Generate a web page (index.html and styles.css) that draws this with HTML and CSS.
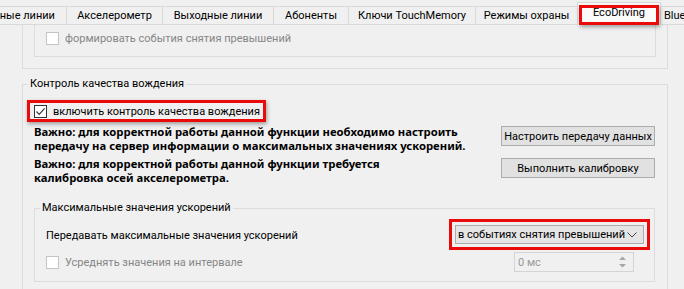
FILE: index.html
```html
<!DOCTYPE html>
<html lang="ru">
<head>
<meta charset="utf-8">
<link rel="stylesheet" href="styles.css">
</head>
<body>
<div class="tabbar">
  <div class="tab t0">Входные линии</div>
  <div class="tab t1">Акселерометр</div>
  <div class="tab t2">Выходные линии</div>
  <div class="tab t3">Абоненты</div>
  <div class="tab t4">Ключи TouchMemory</div>
  <div class="tab t5">Режимы охраны</div>
  <div class="tab active">EcoDriving</div>
  <div class="tab t7">Bluetooth</div>
</div>
<div class="page">
  <div class="g1">
    <div class="g1i">
      <label class="chk disabled"><span class="box"></span>формировать события снятия превышений</label>
    </div>
  </div>
  <fieldset class="grp g2">
    <legend>Контроль качества вождения</legend>
    <label class="chk hl"><span class="box checked"><svg width="11" height="11" viewBox="0 0 11 11"><path d="M1.5 5.5 L4.2 8.3 L9.6 2.3" fill="none" stroke="#3a3a3a" stroke-width="1.2"/></svg></span>включить контроль качества вождения</label>
    <div class="notes">
      <p class="note">Важно: для корректной работы данной функции необходимо настроить<br>передачу на сервер информации о максимальных значениях ускорений.</p>
      <button class="btn b1">Настроить передачу данных</button>
      <p class="note">Важно: для корректной работы данной функции требуется<br>калибровка осей акселерометра.</p>
      <button class="btn b2">Выполнить калибровку</button>
    </div>
    <fieldset class="grp g3">
      <legend>Максимальные значения ускорений</legend>
      <div class="row r1">
        <span class="lbl">Передавать максимальные значения ускорений</span>
        <div class="select">в событиях снятия превышений<svg class="chev" width="10" height="6" viewBox="0 0 10 6"><path d="M0.5 0.5 L5 5 L9.5 0.5" fill="none" stroke="#444" stroke-width="1"/></svg></div>
      </div>
      <div class="row r2">
        <label class="chk disabled"><span class="box"></span>Усреднять значения на интервале</label>
        <div class="spin"><span>0 мс</span><span class="arrows"><svg width="9" height="14" viewBox="0 0 9 14"><path d="M1 5 L4.5 1.5 L8 5 Z M1 9 L4.5 12.5 L8 9 Z" fill="#a6a6a6"/></svg></span></div>
      </div>
    </fieldset>
  </fieldset>
</div>
</body>
</html>
```

FILE: styles.css
```css
html, body {
  margin: 0;
  padding: 0;
}
body {
  width: 684px;
  height: 289px;
  overflow: hidden;
  background: #f0f0f0;
  font-family: Roboto, "Noto Sans", sans-serif;
  font-size: 11px;
  color: #000;
}
.tabbar {
  height: 25px;
  box-sizing: border-box;
  border-bottom: 1px solid #d9d9d9;
  display: flex;
  align-items: flex-end;
  white-space: nowrap;
}
.tab {
  box-sizing: border-box;
  border: 1px solid #d9d9d9;
  border-bottom: none;
  margin-left: -1px;
  margin-bottom: -1px;
  height: 19px;
  display: flex;
  align-items: center;
  justify-content: center;
  flex: none;
  padding-bottom: 1px;
}
.t0 { width: 104px; margin-left: -37px; }
.t1 { width: 97px; }
.t2 { width: 112px; }
.t3 { width: 76px; }
.t4 { width: 128px; }
.t5 { width: 103px; }
.tab.active {
  width: 84px;
  height: 23px;
  background: #fbfbfb;
  position: relative;
  margin-left: -1px;
  margin-right: -2px;
  z-index: 1;
  padding-bottom: 3px;
}
.tab.active::after {
  content: "";
  position: absolute;
  left: 1px;
  right: 1px;
  top: 2px;
  bottom: 0;
  border: 3px solid #ea0a0a;
  box-shadow: 1px 2px 4px rgba(0,0,0,0.35);
}
.t7 { width: 60px; justify-content: flex-start; padding-left: 5px; }

.page {
  padding-left: 22px;
}
.g1 {
  width: 646px;
  box-sizing: border-box;
  border: 1px solid #dcdcdc;
  border-top: none;
  padding: 0 11px 11px;
}
.g1i {
  border: 1px solid #dcdcdc;
  border-top: none;
  padding: 7px 11px 11px;
}
.chk {
  display: flex;
  align-items: center;
  height: 13px;
  line-height: 13px;
}
.box {
  width: 13px;
  height: 13px;
  box-sizing: border-box;
  border: 1px solid #333;
  background: #fff;
  margin-right: 5px;
  flex: none;
  display: flex;
  align-items: center;
  justify-content: center;
}
.chk.disabled { color: #868686; }
.chk.disabled .box { border-color: #c4c4c4; margin-right: 6px; }

.grp {
  margin: 0;
  border: 1px solid #dcdcdc;
  min-inline-size: 0;
}
.grp legend {
  padding: 0 2px;
  line-height: 16px;
  height: 16px;
}
.g2 {
  width: 646px;
  box-sizing: border-box;
  margin-top: 7px;
  padding: 8px 12px 20px 11px;
  border-bottom: none;
}
.g2 > legend { margin-left: -6px; }

.chk.hl {
  display: inline-flex;
  height: 16px;
  border: 3px solid #ea0a0a;
  padding: 0 3px 0 4px;
  margin-left: -7px;
  box-shadow: 1px 2px 4px rgba(0,0,0,0.35);
}
.chk.hl .box { margin-right: 6px; }

.notes {
  display: grid;
  grid-template-columns: 1fr 154px;
  column-gap: 20px;
  row-gap: 4px;
  margin-top: 3px;
}
.note {
  margin: 0;
  font-family: "Noto Sans", sans-serif;
  font-weight: bold;
  font-size: 11.3px;
  line-height: 14px;
  white-space: nowrap;
}
.btn {
  font: inherit;
  height: 20px;
  background: #e1e1e1;
  border: 1px solid #adadad;
  padding: 0;
  color: #000;
  align-self: start;
  white-space: nowrap;
}
.b1 { margin-top: 1px; }
.b2 { margin-top: 1px; }

.g3 {
  margin-top: 15px;
  padding: 9px 10px 9px 11px;
}
.g3 > legend { margin-left: -6px; }
.row {
  display: flex;
  align-items: center;
  justify-content: space-between;
}
.r2 { margin-top: 8px; }
.r2 .spin { margin-right: 10px; }
.select {
  width: 189px;
  height: 19px;
  box-sizing: border-box;
  background: #e5e5e5;
  border: 1px solid #acacac;
  display: flex;
  align-items: center;
  justify-content: space-between;
  padding: 0 6px 0 2px;
  outline: 3px solid #ea0a0a;
  outline-offset: 3px;
  white-space: nowrap;
}
.lbl { padding-top: 1px; }
.spin {
  width: 120px;
  height: 20px;
  box-sizing: border-box;
  border: 1px solid #d4d4d4;
  display: flex;
  align-items: center;
  justify-content: space-between;
  padding: 0 6px 0 3px;
  color: #9a9a9a;
}
.arrows { display: flex; }
```
